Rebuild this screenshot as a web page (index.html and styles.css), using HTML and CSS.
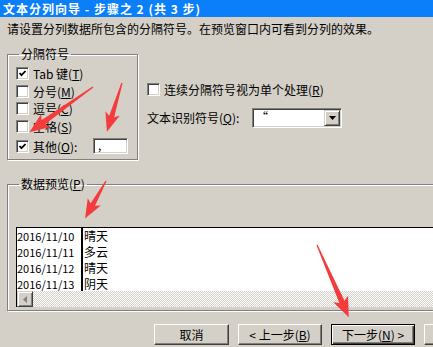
FILE: index.html
```html
<!DOCTYPE html>
<html lang="zh-CN">
<head>
    <meta charset="UTF-8">
    <meta name="viewport" content="width=device-width, initial-scale=1.0">
    <title>文本分列向导 - 步骤之 2</title>
    <link rel="stylesheet" href="styles.css">
</head>
<body>
    <div class="titlebar">文本分列向导 - 步骤之 2 (共 3 步)</div>
    <p class="intro">请设置分列数据所包含的分隔符号。在预览窗口内可看到分列的效果。</p>

    <div class="options">
        <fieldset class="group delimiters">
            <legend>分隔符号</legend>
            <div class="check-row"><span class="checkbox checked"><svg viewBox="0 0 9 9"><polyline points="1.5,4 3.5,6.2 7.5,2"/></svg></span>Tab 键(<u>T</u>)</div>
            <div class="check-row"><span class="checkbox"></span>分号(<u>M</u>)</div>
            <div class="check-row"><span class="checkbox"></span>逗号(<u>C</u>)</div>
            <div class="check-row"><span class="checkbox"></span>空格(<u>S</u>)</div>
            <div class="check-row other">
                <span class="checkbox checked"><svg viewBox="0 0 9 9"><polyline points="1.5,4 3.5,6.2 7.5,2"/></svg></span>其他(<u>O</u>):
                <span class="textbox">,</span>
            </div>
        </fieldset>

        <div class="side">
            <div class="check-row"><span class="checkbox"></span>连续分隔符号视为单个处理(<u>R</u>)</div>
            <div class="qualifier">
                <span class="qualifier-label">文本识别符号(<u>Q</u>):</span>
                <span class="combo">
                    <span class="combo-value">“</span>
                    <span class="combo-btn"><svg viewBox="0 0 7 4"><polygon points="0,0 7,0 3.5,4"/></svg></span>
                </span>
            </div>
        </div>
    </div>

    <fieldset class="group preview">
        <legend>数据预览(<u>P</u>)</legend>
        <div class="preview-box">
            <div class="preview-rows">
                <div class="col col-date">
                    <div>2016/11/10</div>
                    <div>2016/11/11</div>
                    <div>2016/11/12</div>
                    <div>2016/11/13</div>
                </div>
                <div class="col col-text">
                    <div>晴天</div>
                    <div>多云</div>
                    <div>晴天</div>
                    <div>阴天</div>
                </div>
            </div>
            <div class="hscroll">
                <span class="scroll-btn"><svg viewBox="0 0 4 7"><polygon points="4,0 4,7 0,3.5"/></svg></span>
            </div>
        </div>
    </fieldset>

    <div class="buttons">
        <button class="btn cancel">取消</button>
        <button class="btn back">&lt; 上一步(<u>B</u>)</button>
        <button class="btn next default">下一步(<u>N</u>) &gt;</button>
        <button class="btn finish" aria-label="完成"></button>
    </div>

    <!-- annotation arrows drawn over the dialog -->
    <svg class="arrows" viewBox="0 0 433 347">
        <polygon transform="translate(93 87) rotate(144.6)" points="0,-0.6 61,-2.8 58,-8 78,0 58,8 61,2.8 0,0.6"/>
        <polygon transform="translate(122 83) rotate(107.2)" points="0,-0.6 35,-2.6 32,-7.5 51,0 32,7.5 35,2.6 0,0.6"/>
        <polygon transform="translate(106 181) rotate(119.2)" points="0,-0.6 27,-2.5 24,-7.5 43,0 24,7.5 27,2.5 0,0.6"/>
        <polygon transform="translate(317 245) rotate(66.3)" points="0,-0.6 62,-2.8 59,-8 79,0 59,8 62,2.8 0,0.6"/>
    </svg>
</body>
</html>
```

FILE: styles.css
```css
/* General */
body {
    margin: 0;
    width: 433px;
    height: 347px;
    overflow: hidden;
    position: relative;
    background: #d4d0c8;
    color: #000;
    font-family: "Noto Sans CJK SC", sans-serif;
    font-size: 12px;
}

u {
    text-decoration: underline;
}

/* Title bar */
.titlebar {
    height: 17px;
    line-height: 17px;
    padding-left: 3px;
    background: #0a7ff9;
    color: #fff;
    font-weight: bold;
    letter-spacing: 1px;
    white-space: nowrap;
}

.intro {
    margin: 4px 0 0 7px;
    line-height: 16px;
    white-space: nowrap;
}

/* Group boxes */
.group {
    margin: 0;
    padding: 0;
    border: 1px solid #808080;
    box-shadow: inset 1px 1px 0 #fff, 1px 1px 0 #fff;
    box-sizing: border-box;
}

.group legend {
    margin-left: 3px;
    padding: 0 2px;
    line-height: 16px;
}

.options {
    display: flex;
    margin-top: 9px;
}

.delimiters {
    margin-left: 7px;
    width: 131px;
    height: 114px;
    padding: 3px 9px 0 8px;
}

.check-row {
    display: flex;
    align-items: center;
    height: 17.5px;
    white-space: nowrap;
}

.check-row.other {
    height: 22px;
}

.checkbox {
    width: 13px;
    height: 13px;
    box-sizing: border-box;
    margin-right: 4px;
    background: #fff;
    border: 1px solid;
    border-color: #808080 #fff #fff #808080;
    box-shadow: inset 1px 1px 0 #404040, inset -1px -1px 0 #d4d0c8;
    display: flex;
    align-items: center;
    justify-content: center;
    flex-shrink: 0;
}

.checkbox svg {
    width: 9px;
    height: 9px;
}

.checkbox polyline {
    fill: none;
    stroke: #000;
    stroke-width: 1.8;
}

.textbox {
    margin-left: auto;
    width: 35px;
    height: 16px;
    box-sizing: border-box;
    padding-left: 4px;
    line-height: 11px;
    background: #fff;
    border: 1px solid;
    border-color: #808080 #fff #fff #808080;
    box-shadow: inset 1px 1px 0 #404040, inset -1px -1px 0 #d4d0c8;
}

/* Right column */
.side {
    margin-left: 9px;
    padding-top: 35px;
}

.qualifier {
    display: flex;
    align-items: center;
    height: 20px;
    margin-top: 9px;
}

.qualifier-label {
    width: 105px;
    white-space: nowrap;
}

.combo {
    display: flex;
    justify-content: space-between;
    width: 90px;
    height: 20px;
    box-sizing: border-box;
    padding: 1px;
    background: #fff;
    border: 1px solid;
    border-color: #808080 #fff #fff #808080;
    box-shadow: inset 1px 1px 0 #404040, inset -1px -1px 0 #d4d0c8;
}

.combo-value {
    padding-left: 2px;
    line-height: 14px;
}

.combo-btn {
    width: 16px;
    height: 16px;
    box-sizing: border-box;
    background: #d4d0c8;
    border: 1px solid;
    border-color: #d4d0c8 #404040 #404040 #d4d0c8;
    box-shadow: inset 1px 1px 0 #fff, inset -1px -1px 0 #808080;
    display: flex;
    align-items: center;
    justify-content: center;
}

.combo-btn svg {
    width: 7px;
    height: 4px;
}

/* Data preview */
.preview {
    margin: 16px 0 0 7px;
    width: 440px;
    height: 135px;
    padding: 35px 0 0 8px;
}

.preview-box {
    border-top: 1px solid #000;
    border-left: 1px solid #000;
    background: #fff;
}

.preview-rows {
    display: flex;
    height: 63px;
    overflow: hidden;
}

.col div {
    height: 16px;
    line-height: 16px;
    white-space: nowrap;
}

.col-date {
    width: 64px;
    font-size: 11px;
    border-right: 2px solid #000;
}

.col-text {
    padding-left: 1px;
}

.hscroll {
    height: 16px;
    background: repeating-conic-gradient(#d4d0c8 0 25%, #fff 0 50%) 0 0 / 2px 2px;
}

.scroll-btn {
    display: flex;
    align-items: center;
    justify-content: center;
    width: 16px;
    height: 16px;
    box-sizing: border-box;
    background: #d4d0c8;
    border: 1px solid;
    border-color: #d4d0c8 #404040 #404040 #d4d0c8;
    box-shadow: inset 1px 1px 0 #fff, inset -1px -1px 0 #808080;
}

.scroll-btn svg {
    width: 4px;
    height: 7px;
    fill: #808080;
}

/* Buttons */
.buttons {
    display: flex;
    gap: 9px;
    margin-top: 13px;
    padding-left: 154px;
}

.btn {
    flex-shrink: 0;
    height: 21px;
    padding: 0;
    background: #d4d0c8;
    color: #000;
    font-family: inherit;
    font-size: 12px;
    border: 1px solid;
    border-color: #fff #404040 #404040 #fff;
    box-shadow: inset -1px -1px 0 #808080;
    white-space: nowrap;
}

.cancel,
.finish {
    width: 75px;
}

.back,
.next {
    width: 84px;
}

.btn.default {
    border-color: #000;
    box-shadow: inset 1px 1px 0 #fff, inset -1px -1px 0 #404040, inset -2px -2px 0 #808080;
}

/* Annotation arrows */
.arrows {
    position: absolute;
    top: 0;
    left: 0;
    width: 433px;
    height: 347px;
    pointer-events: none;
    fill: #f43c3c;
}
```
